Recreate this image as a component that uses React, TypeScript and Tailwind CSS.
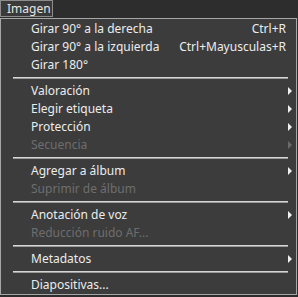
type Item =
  | { kind: 'sep' }
  | { kind: 'row'; label: string; shortcut?: string; sub?: boolean; disabled?: boolean };

const ITEMS: Item[] = [
  { kind: 'row', label: 'Girar 90° a la derecha', shortcut: 'Ctrl+R' },
  { kind: 'row', label: 'Girar 90° a la izquierda', shortcut: 'Ctrl+Mayusculas+R' },
  { kind: 'row', label: 'Girar 180°' },
  { kind: 'sep' },
  { kind: 'row', label: 'Valoración', sub: true },
  { kind: 'row', label: 'Elegir etiqueta', sub: true },
  { kind: 'row', label: 'Protección', sub: true },
  { kind: 'row', label: 'Secuencia', sub: true, disabled: true },
  { kind: 'sep' },
  { kind: 'row', label: 'Agregar a álbum', sub: true },
  { kind: 'row', label: 'Suprimir de álbum', disabled: true },
  { kind: 'sep' },
  { kind: 'row', label: 'Anotación de voz', sub: true },
  { kind: 'row', label: 'Reducción ruido AF...', disabled: true },
  { kind: 'sep' },
  { kind: 'row', label: 'Metadatos', sub: true },
  { kind: 'sep' },
  { kind: 'row', label: 'Diapositivas...' },
];

function Arrow({ disabled }: { disabled?: boolean }) {
  return (
    <span
      className={`block w-0 h-0 border-y-[4px] border-y-transparent border-l-[4px] ${
        disabled ? 'border-l-[#6a6a6a]' : 'border-l-[#f0f0f0]'
      }`}
    />
  );
}

export default function App() {
  return (
    <div
      className="w-[298px] h-[297px] bg-[#2d2d2d] text-[12px] leading-none"
      style={{ fontFamily: '"Noto Sans", "Liberation Sans", sans-serif' }}
    >
      <div className="h-[17px] flex">
        <div className="w-[53px] h-[17px] border border-[#8c8c8c] bg-[#3a3a3a] text-[#e6e6e6] flex items-center pl-[6px]">
          Imagen
        </div>
      </div>
      <div className="mt-[1px] w-[297px] border border-[#a6a6a6] bg-[#3c3c3c] pt-[1px]">
        {ITEMS.map((it, i) =>
          it.kind === 'sep' ? (
            <div key={i} className="h-[8px] flex items-center pl-[12px] pr-[8px]">
              <div className="h-[2px] w-full bg-[#d6d6d6] border-b border-[#9a9a9a]" />
            </div>
          ) : (
            <div key={i} className="h-[18px] flex items-center pl-[30px] pr-[4px]">
              <span className={`flex-1 ${it.disabled ? 'text-[#6e6e6e]' : 'text-[#ececec]'}`}>
                {it.label}
              </span>
              {it.shortcut && <span className="text-[#ececec] mr-[6px]">{it.shortcut}</span>}
              {it.sub && <Arrow disabled={it.disabled} />}
            </div>
          )
        )}
      </div>
    </div>
  );
}
